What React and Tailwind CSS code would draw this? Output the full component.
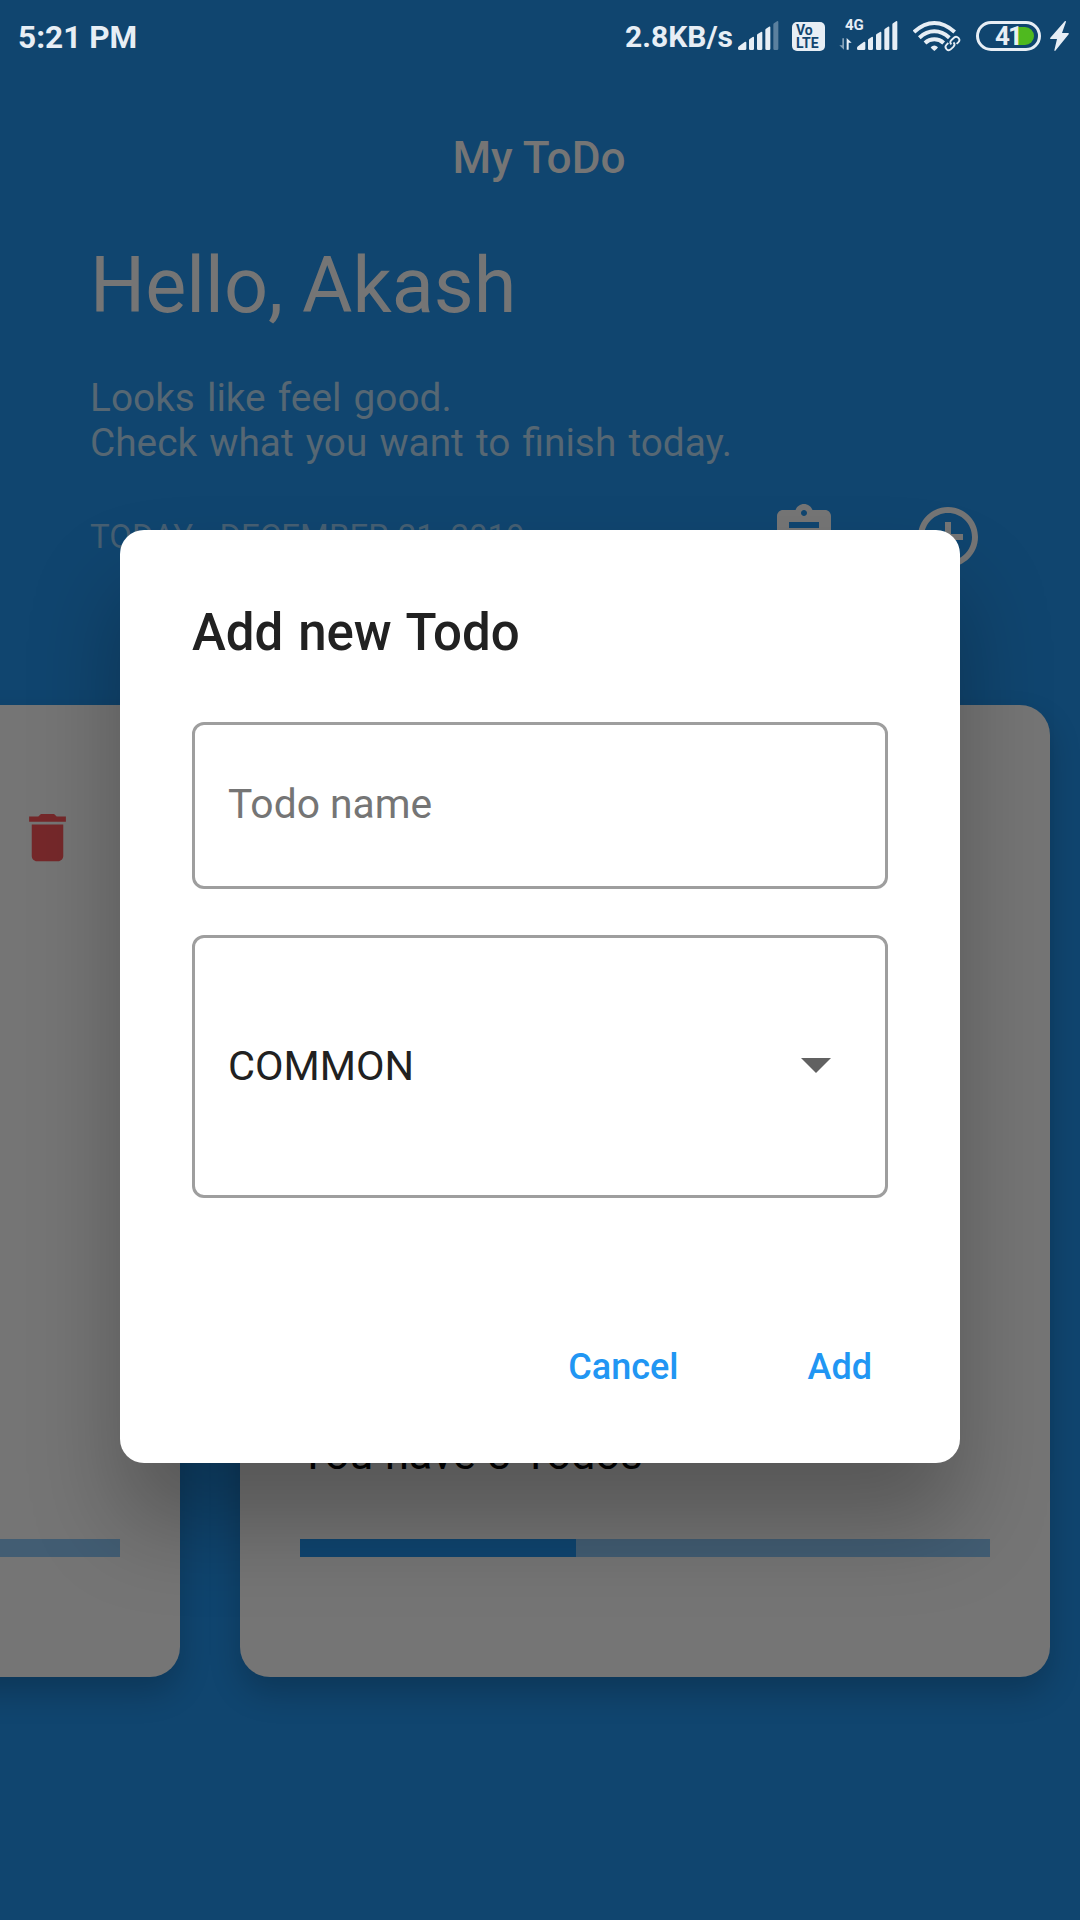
import React from "react";

const LIGHT = "#e7eef5";

/* Cellular strength bars with slanted tops; `last` is the opacity of the tallest bar. */
function Signal({ className, last = 1 }) {
  return (
    <svg className={className} viewBox="0 0 123 225" fill={LIGHT}>
      <path d="M4 150q-4 0-4-4v-2q0-3 3-5l17-13q5-3 5 2v18q0 4-4 4z" />
      <path d="M33 121q0-3 2-4l9-6q4-2 4 2v33q0 4-4 4h-7q-4 0-4-4z" />
      <path d="M57 106q0-3 2-4l10-6q4-2 4 2v48q0 4-4 4h-8q-4 0-4-4z" />
      <path d="M82 90q0-3 2-4l9-6q4-2 4 2v64q0 4-4 4h-7q-4 0-4-4z" />
      <path opacity={last} d="M106 74q0-3 2-4l9-6q4-2 4 2v80q0 4-4 4h-7q-4 0-4-4z" />
    </svg>
  );
}

function DataArrows() {
  return (
    <svg className="h-[14px] w-[14px]" viewBox="0 0 42 42" fill={LIGHT}>
      <path opacity="0.55" d="M10 4h5v34L1 25h9z" />
      <path d="M23 38V3l15 14h-9v21z" />
    </svg>
  );
}

function Wifi() {
  return (
    <svg className="h-[75px] w-[48px]" viewBox="248 0 144 225" fill="none" stroke={LIGHT}>
      <path strokeWidth="12" d="M251 96Q281 69 312 69T373 96" />
      <path strokeWidth="12" d="M267 113Q288 94 312 94T357 113" />
      <path strokeWidth="12" d="M284 129Q296 118 312 118T340 129" />
      <path fill={LIGHT} stroke="none" d="M301 142Q312 131 323 142Q322 146 312 153Q302 146 301 142z" />
      <g transform="rotate(-43 366 130)">
        <rect x="341" y="120" width="30" height="20" rx="10" stroke="#10456f" strokeWidth="13" />
        <rect x="361" y="120" width="30" height="20" rx="10" stroke="#10456f" strokeWidth="13" />
        <path strokeWidth="5.5" d="M358 121h-7a9.500 9.500 0 0 0 0 19h10a9.500 9.500 0 0 0 9.500-9.500" />
        <path strokeWidth="5.5" d="M374 140h7a9.500 9.500 0 0 0 0-19h-10a9.500 9.500 0 0 0-9.500 9.500" />
      </g>
    </svg>
  );
}

function Battery() {
  return (
    <div className="flex h-[30px] w-[65px] items-center rounded-full border-3 border-[#e7eef5] px-[4px]">
      <div className="relative flex h-[18px] w-full justify-end">
        <div className="h-[18px] w-[20px] rounded-r-full bg-[#4fb91f]" />
        <span className="absolute top-0 left-[12px] text-[26px] leading-[18px] font-bold tracking-[-2px] text-[#e7eef5]">
          41
        </span>
      </div>
    </div>
  );
}

function StatusBar() {
  return (
    <div className="flex h-[75px] items-start pr-[11px] pl-[18px] font-bold text-[#e7eef5]">
      <span className="grow text-[31.600px] leading-[75px]">5:21 PM</span>
      <span className="text-[30px] leading-[74px]">2.8KB/s</span>
      <Signal className="ml-[5px] h-[75px] w-[41px]" last={0.35} />
      <div className="mt-[22px] ml-[13px] flex h-[29px] w-[33px] flex-col items-start justify-center rounded-[5px] bg-[#e7eef5] pl-[4px] text-[14px] leading-[13px] text-[#10456f]">
        <span>Vo</span>
        <span>LTE</span>
      </div>
      <div className="relative ml-[32px] h-[75px] w-[41px]">
        <Signal className="h-[75px] w-[41px]" />
        <span className="absolute top-[17px] left-[-12px] text-[15px] leading-[17px]">4G</span>
        <div className="absolute top-[37px] left-[-18px]">
          <DataArrows />
        </div>
      </div>
      <div className="ml-[15px]">
        <Wifi />
      </div>
      <div className="mt-[21px] ml-[15px]">
        <Battery />
      </div>
      <svg className="mt-[21px] ml-[9px] h-[30px] w-[19px]" viewBox="0 0 57 90" fill={LIGHT}>
        <path d="M45 0L1 50q-2 4 2 4h18L13 88q1 3 3 1L56 40q2-4-2-4H36L48 2q-1-3-3-2z" />
      </svg>
    </div>
  );
}

function Icon({ d, className }) {
  return (
    <svg className={className} viewBox="0 0 24 24" fill="currentColor">
      <path d={d} />
    </svg>
  );
}

const ASSIGNMENT =
  "M19 3h-4.180C14.400 1.840 13.300 1 12 1c-1.300 0-2.400.840-2.820 2H5c-1.100 0-2 .9-2 2v14c0 1.100.9 2 2 2h14c1.100 0 2-.9 2-2V5c0-1.100-.9-2-2-2zm-7 0c.550 0 1 .450 1 1s-.450 1-1 1-1-.450-1-1 .450-1 1-1zm2 14H7v-2h7v2zm3-4H7v-2h10v2zm0-4H7V7h10v2z";
const ADD_CIRCLE =
  "M13 7h-2v4H7v2h4v4h2v-4h4v-2h-4V7zm-1-5C6.480 2 2 6.480 2 12s4.480 10 10 10 10-4.480 10-10S17.520 2 12 2zm0 18c-4.410 0-8-3.590-8-8s3.590-8 8-8 8 3.590 8 8-3.590 8-8 8z";
const DELETE =
  "M6 19c0 1.100.9 2 2 2h8c1.100 0 2-.9 2-2V7H6v12zM19 4h-3.500l-1-1h-5l-1 1H5v2h14V4z";

function Card({ children, progress }) {
  return (
    <div className="flex h-[972px] w-[810px] shrink-0 flex-col rounded-[30px] bg-[#757575] px-[60px] pb-[120px] shadow-[0_16px_32px_rgba(0,0,0,0.2)]">
      {children}
      <div className="h-[18px] bg-[#425d73]">
        <div className="h-full bg-[#0f4570]" style={{ width: `${progress}%` }} />
      </div>
    </div>
  );
}

function Dialog() {
  return (
    <div className="absolute inset-0 flex items-center justify-center pt-[72px]">
      <div className="h-[933px] w-[840px] rounded-[24px] bg-white p-[72px] shadow-[0_60px_90px_rgba(0,0,0,0.26)]">
        <h2 className="text-[51px] leading-[62px] font-medium text-[#212121] [word-spacing:2.200px]">Add new Todo</h2>
        <div className="mt-[58px] flex h-[167px] items-center rounded-[12px] border-3 border-[#9e9e9e] px-[33px] pb-px text-[40.800px] text-[#757575]">
          Todo name
        </div>
        <div className="mt-[46px] flex h-[263px] items-center justify-between rounded-[12px] border-3 border-[#9e9e9e] pr-[33px] pb-[5px] pl-[33px] text-[41.500px] text-[#212121]">
          <span className="pt-[5px]">COMMON</span>
          <Icon d="M7 10l5 5 5-5z" className="size-[72px] text-[#616161]" />
        </div>
        <div className="mt-[145px] flex justify-end gap-[129px] pr-[16px] text-[36px] leading-[48px] font-medium text-[#2196f3]">
          <button>Cancel</button>
          <button>Add</button>
        </div>
      </div>
    </div>
  );
}

export default function App() {
  return (
    <div className="relative h-[1920px] w-[1080px] overflow-hidden bg-[#10456f] font-[Roboto,sans-serif] text-[#757575]">
      <StatusBar />
      <header className="h-[165px] pr-[2px] text-center text-[44.200px] leading-[167px] font-medium">My ToDo</header>
      <section className="pr-[96px] pl-[90px]">
        <h1 className="text-[77.400px] leading-[91px] [word-spacing:-0.500px]">Hello, Akash</h1>
        <p className="mt-[44px] text-[38.800px] leading-[45px] text-[#566773] [word-spacing:2.500px]">
          Looks like feel good.
          <br />
          Check what you want to finish today.
        </p>
        <div className="mt-[36px] flex h-[72px] items-center">
          <span className="grow text-[33px] text-[#465f72] [word-spacing:1px]">TODAY : DECEMBER 21, 2019</span>
          <Icon d={ASSIGNMENT} className="mr-[72px] size-[72px]" />
          <Icon d={ADD_CIRCLE} className="size-[72px]" />
        </div>
      </section>
      <main className="mt-[132px] -ml-[630px] flex gap-[60px]">
        <Card progress={0}>
          <div className="-mr-[60px] flex grow justify-end pt-[101px] pr-[101px]">
            <Icon d={DELETE} className="size-[63px] text-[#75282a]" />
          </div>
        </Card>
        <Card progress={40}>
          <div className="flex grow items-end pb-[58px] text-[43.300px] leading-[52px] text-black [word-spacing:1px]">
            You have 3 Todos
          </div>
        </Card>
      </main>
      <Dialog />
    </div>
  );
}
